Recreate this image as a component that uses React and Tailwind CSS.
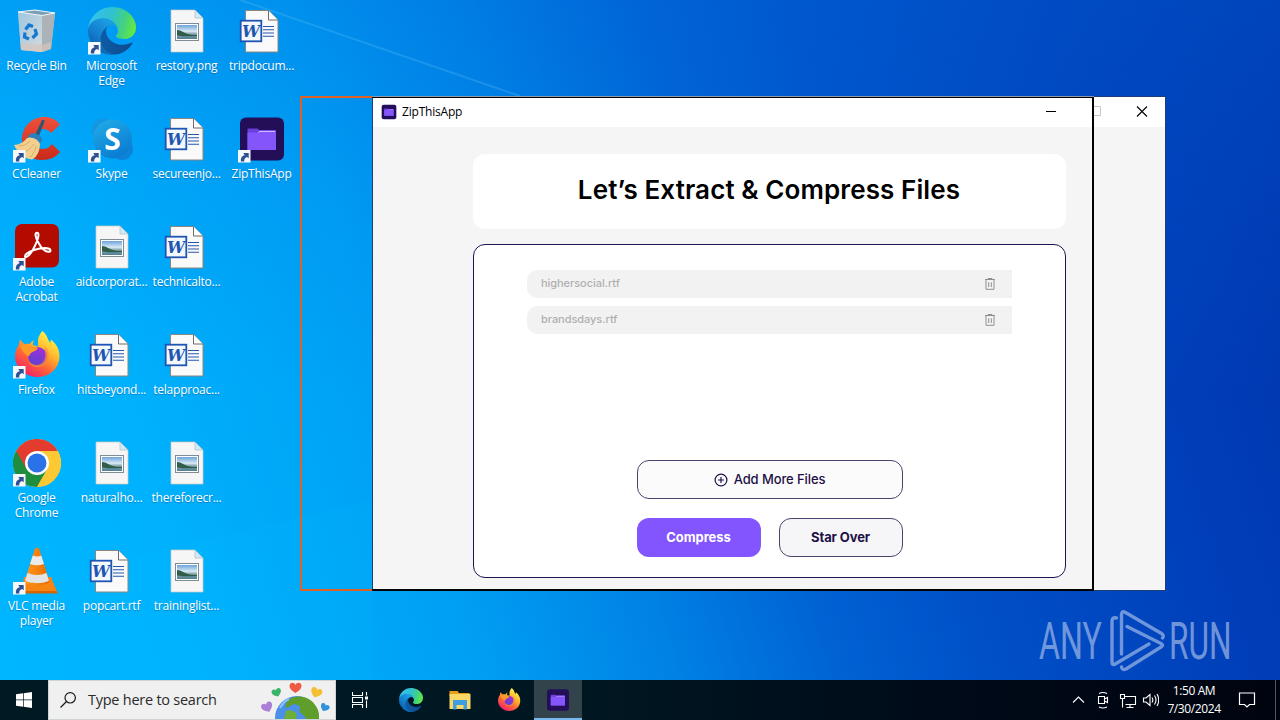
import React from "react";
import clsx from "clsx";

function ShortcutArrow() {
  return (
    <g>
      <rect x="0" y="35" width="12.5" height="12.5" fill="#f6f9fc" />
      <path d="M3 46.5c-.6-3.400 1-5.700 3.700-6.200L5.300 38h5.400v5.300L9 41.900c-2.200.8-3 2.300-2.700 4.600z" fill="#2d4f94" />
    </g>
  );
}

function RecycleBin() {
  return (
    <svg viewBox="0 0 48 48" className="w-12 h-12">
      <defs>
        <linearGradient id="binFront" x1="0" y1="0" x2="1" y2="1">
          <stop offset="0" stopColor="#9fc6de" />
          <stop offset="1" stopColor="#d3dade" />
        </linearGradient>
      </defs>
      <path d="M5 5l17-2 20 3-4 36-9 3-21-2z" fill="#a9bfcc" />
      <path d="M5 5l24 3v37l-21-2z" fill="url(#binFront)" />
      <path d="M29 8l13-2-4 36-9 3z" fill="#abb3b8" />
      <path d="M8 36l21 2 9-3-.5 7-8.500 3-21-2z" fill="#d9c4b8" opacity="0.700" />
      <path d="M5 5l17-2 20 3-13 2.500z" fill="#7ba0b4" stroke="#eef6fa" strokeWidth="1" />
      <g fill="none" stroke="#1577cf" strokeWidth="3.200">
        <path d="M12.500 22.500l3.500-4.500 4 1.500" />
        <path d="M22 22l1.500 5-4 4" />
        <path d="M16 32l-4.500-2 .5-4.500" />
      </g>
    </svg>
  );
}

function EdgeIcon({ shortcut, className = "w-12 h-12" }) {
  return (
    <svg viewBox="0 0 48 48" className={className}>
      <defs>
        <linearGradient id="edgeA" x1="0.200" y1="0.500" x2="1" y2="0.500">
          <stop offset="0" stopColor="#0c59a4" />
          <stop offset="1" stopColor="#114a8b" />
        </linearGradient>
        <linearGradient id="edgeB" x1="0.700" y1="0.200" x2="0.200" y2="0.900">
          <stop offset="0" stopColor="#1b9de2" />
          <stop offset="0.500" stopColor="#1480cf" />
          <stop offset="1" stopColor="#0a5cae" />
        </linearGradient>
        <linearGradient id="edgeC" x1="0" y1="0.400" x2="1" y2="0.600">
          <stop offset="0" stopColor="#35c1f1" />
          <stop offset="0.450" stopColor="#2fc2cf" />
          <stop offset="0.750" stopColor="#43d27e" />
          <stop offset="1" stopColor="#66eb3e" />
        </linearGradient>
      </defs>
      <g transform="scale(0.1875) translate(-4.63 -4.92)">
        <path fill="url(#edgeA)" d="M235.68 195.46a93.73 93.73 0 01-10.54 4.710 101.870 101.870 0 01-35.900 6.460c-47.320 0-88.540-32.550-88.540-74.320A31.480 31.480 0 01117.130 105c-42.800 1.800-53.800 46.400-53.800 72.530 0 73.880 68.090 81.370 82.760 81.370 7.910 0 19.840-2.300 27-4.560l1.310-.44a128.340 128.340 0 0066.600-52.800 4 4 0 00-5.320-5.640z" />
        <path fill="url(#edgeB)" d="M110.340 246.340A79.200 79.200 0 0187.600 225a80.720 80.720 0 0129.530-120c3.120-1.470 8.450-4.130 15.540-4a32.350 32.350 0 0125.690 13 31.880 31.880 0 016.360 18.660c0-.21 24.460-79.600-80-79.600-43.900 0-80 41.660-80 78.210a130.150 130.150 0 0012.110 56 128 128 0 00156.380 67.110 75.550 75.550 0 01-62.780-8z" />
        <path fill="url(#edgeC)" d="M156.940 153.780c-.81 1.050-3.300 2.500-3.300 5.660 0 2.610 1.700 5.120 4.720 7.230 14.380 10 41.490 8.680 41.560 8.680a59.560 59.560 0 0030.270-8.350 61.380 61.380 0 0030.430-52.880c.26-22.410-8-37.310-11.340-43.910C228.090 28.760 182.350 4.920 132.610 4.920a128 128 0 00-128 126.200c.48-36.540 36.800-66.050 80-66.050 3.500 0 23.460.34 42 10.070 16.340 8.580 24.900 18.940 30.850 29.210 6.180 10.670 7.280 24.150 7.280 29.520s-2.740 13.330-7.800 19.910z" />
      </g>
      {shortcut && <ShortcutArrow />}
    </svg>
  );
}

function ImageFile() {
  return (
    <svg viewBox="0 0 48 48" className="w-12 h-12">
      <defs>
        <linearGradient id="photo" x1="0" y1="0" x2="0" y2="1">
          <stop offset="0" stopColor="#6da4dc" />
          <stop offset="0.450" stopColor="#d8e9f3" />
          <stop offset="0.600" stopColor="#93b2b8" />
          <stop offset="1" stopColor="#4d7d92" />
        </linearGradient>
      </defs>
      <path d="M8 3h24l8 8v34H8z" fill="#f6f6f6" stroke="#cfc8c4" strokeWidth="0.700" />
      <path d="M32 3v8h8z" fill="#cfeafb" stroke="#b5bcc0" strokeWidth="0.700" />
      <rect x="12.500" y="16.500" width="23" height="17" fill="#fff" stroke="#7f8c93" />
      <rect x="14" y="18" width="20" height="14" fill="url(#photo)" />
      <path d="M14 23c4 0 7 3 11 4 3 .8 6 .8 9 1v1c-6 .5-14 .5-20-.5z" fill="#2f5d49" />
    </svg>
  );
}

function WordFile() {
  return (
    <svg viewBox="0 0 48 48" className="w-12 h-12">
      <path d="M7.500 3.500h23l9.500 9.500v32H7.500z" fill="#fafafa" stroke="#8b8580" />
      <path d="M30.500 3.500v9.500H40" fill="#fff" stroke="#6f6a66" />
      <path d="M25 19.500h11M25 22.700h11M25 26h11M25 29.300h11" stroke="#2457ad" strokeWidth="1.100" />
      <rect x="2.700" y="13.700" width="20.600" height="20.600" fill="#f4f8fd" stroke="#1f55b2" strokeWidth="1.800" />
      <text
        x="13"
        y="29.700"
        textAnchor="middle"
        fontFamily="DejaVu Serif, serif"
        fontWeight="700"
        fontStyle="italic"
        fontSize="16"
        fill="#1f55b2"
      >
        W
      </text>
    </svg>
  );
}

function CCleaner() {
  return (
    <svg viewBox="0 0 48 48" className="w-12 h-12">
      <defs>
        <linearGradient id="ccRed" x1="0" y1="0" x2="0" y2="1">
          <stop offset="0" stopColor="#f0503a" />
          <stop offset="1" stopColor="#c92a18" />
        </linearGradient>
      </defs>
      <path d="M47 9.500C42 3.500 36 1.500 30 2 17 3 9 13 9 25c0 12 8 20 20 20 8 0 14-3 18-8l-8-8c-3 4-6 5-9 5-6 0-9-4-9-10 0-6 4-10 9-10 3 0 6 1 8 4z" fill="url(#ccRed)" />
      <path d="M29 5c1.500-.8 3 .2 2.500 1.600L24 26l-4-1.500z" fill="#2d5573" />
      <path d="M17 19c4-2 11 1 12 5 0 2-1 4-3 5L14 23z" fill="#2c7fbd" />
      <path d="M14 23c5-2 12 2 13 6-.5 8-3 13-8 15.500C12 44 5 38 1 30c5 0 10-3 13-7z" fill="#f2cf8e" />
      <path d="M6 31c5 0 8-2 11-5M11 37c4-1 7-4 10-8M17 42c3-2 5-6 6-11" fill="none" stroke="#d3a45d" strokeWidth="0.800" />
      <ShortcutArrow />
    </svg>
  );
}

function Skype() {
  return (
    <svg viewBox="0 0 48 48" className="w-12 h-12">
      <defs>
        <linearGradient id="sky" x1="0" y1="0" x2="0.500" y2="1">
          <stop offset="0" stopColor="#22aeea" />
          <stop offset="1" stopColor="#0b7ed2" />
        </linearGradient>
      </defs>
      <circle cx="15" cy="15" r="11.500" fill="#1596e0" />
      <circle cx="34" cy="34" r="11" fill="#0c82d8" />
      <circle cx="24.500" cy="24" r="19.500" fill="url(#sky)" />
      <text x="24.500" y="35" textAnchor="middle" fontFamily="Open Sans, sans-serif" fontWeight="700" fontSize="30" fill="#fff">
        S
      </text>
      <ShortcutArrow />
    </svg>
  );
}

function ZipIcon({ shortcut, className = "w-12 h-12" }) {
  return (
    <svg viewBox="0 0 48 48" className={className}>
      <rect x="2" y="2.500" width="44" height="43" rx="6" fill="#230f58" />
      <path d="M9.500 14.500q0-1 1-1h9l1.500 1.500h15.500q1.500 0 1.500 1.500v18.500H9.500z" fill="#6a3fdc" />
      <path d="M9.500 17.500H20l2-2h16V35H9.500z" fill="#8355fb" />
      <path d="M20 17.500l1.500-1H37" stroke="#d8c9ff" strokeWidth="0.900" fill="none" />
      {shortcut && <ShortcutArrow />}
    </svg>
  );
}

function Acrobat() {
  return (
    <svg viewBox="0 0 48 48" className="w-12 h-12">
      <rect x="2" y="1" width="44" height="43.500" rx="7" fill="#b30b00" />
      <path
        d="M12 33.500c0-3 8-7 15-8 5-.7 10-.2 10.500 1.700.4 2-3.500 2.500-7-.7C26 22.500 23 15.500 22.500 12c-.3-3 3-3 3 0 0 4-3 10-6 15.500-3 5-7.500 8.500-7.500 6z"
        fill="none"
        stroke="#fff"
        strokeWidth="2"
        strokeLinejoin="round"
      />
      <ShortcutArrow />
    </svg>
  );
}

function Firefox({ shortcut, className = "w-12 h-12" }) {
  return (
    <svg viewBox="0 0 48 48" className={className}>
      <defs>
        <linearGradient id="foxBody" x1="0.800" y1="0.100" x2="0.250" y2="0.950">
          <stop offset="0" stopColor="#fff04a" />
          <stop offset="0.350" stopColor="#ffb52c" />
          <stop offset="0.650" stopColor="#ff6536" />
          <stop offset="1" stopColor="#f52269" />
        </linearGradient>
        <linearGradient id="foxGlobe" x1="0.700" y1="0" x2="0.300" y2="1">
          <stop offset="0" stopColor="#a32fd8" />
          <stop offset="1" stopColor="#5a42d2" />
        </linearGradient>
      </defs>
      <path
        d="M29.500 0c3 2.500 5 5.500 5.700 9 1 .6 1.500 2 1.800 3 .8-1 .9-2 .8-3.500C44 13 46.500 19 46.500 25.500 46.300 37.500 36.500 46 24.500 46S2.300 37 2 25.500c0-5.500 2-9.500 4-12 0-1.700.3-3.500 1-5 2 2 3 3.500 4.500 4.500 2-.5 3.600-.4 5 0C19 10 20 9.500 21 9.500c-1 1.500-1.300 3-1 4.500 2 .5 3.500 1 5 1.500V8c1-3.500 2.500-6 4.500-8z"
        fill="url(#foxBody)"
      />
      <circle cx="24.500" cy="25.500" r="9.500" fill="url(#foxGlobe)" />
      <path d="M7 15c4-2 9-1.500 12 0 2 1.200 5 1.200 6 2-1.500 3-5 3.500-7 5-1 1-1.500 2-2 3.500-4-1.500-7-6-9-10.500z" fill="#ff9a26" />
      <path d="M31 15c4 3 5.500 7 4.500 12-1.500 6.500-7 9.500-12.500 9-4-.5-7-3-8-6.500 3 4 8 5.500 12.500 3.500 5-2.500 6-10 3.500-18z" fill="#ff8a32" opacity="0.700" />
      {shortcut && <ShortcutArrow />}
    </svg>
  );
}

function Chrome() {
  return (
    <svg viewBox="0 0 48 48" className="w-12 h-12">
      <circle cx="24" cy="24" r="24" fill="#fcc934" />
      <path d="M24 24L3.200 12A24 24 0 0 1 44.800 12z" fill="#e33b2e" />
      <path d="M3.200 12A24 24 0 0 0 24 48l10.400-18L24 24z" fill="#1e8e3e" />
      <path d="M24 12h20.800A24 24 0 0 1 24 48l10.400-18z" fill="#fcc934" />
      <path d="M3.200 12L13.600 30 24 12z" fill="#e33b2e" />
      <circle cx="24" cy="24" r="12" fill="#fff" />
      <circle cx="24" cy="24" r="9.500" fill="#2b72e8" />
      <ShortcutArrow />
    </svg>
  );
}

function Vlc() {
  return (
    <svg viewBox="0 0 48 48" className="w-12 h-12">
      <defs>
        <linearGradient id="cone" x1="0" y1="0" x2="1" y2="0">
          <stop offset="0" stopColor="#ff9a1e" />
          <stop offset="1" stopColor="#e96a00" />
        </linearGradient>
      </defs>
      <path d="M11 30h27l6.500 16h-36z" fill="#f58412" />
      <path d="M8.500 44h36v2.500h-36z" fill="#d86400" />
      <path d="M22 1.500q2-1.500 4 0l10.500 33c-3 5-22 5-25 0z" fill="url(#cone)" />
      <path d="M19.800 8.500q4.200 2 8.400 0l2.800 8.500q-7 2.500-14 0z" fill="#ebebeb" />
      <path d="M14.500 26q9.500 4 19 0l2.500 7.500c-4 3.500-20 3.500-24 0z" fill="#e4e4e4" />
      <ShortcutArrow />
    </svg>
  );
}

// filled column by column, six rows each
const shortcuts = [
  { label: "Recycle Bin", icon: <RecycleBin /> },
  { label: "CCleaner", icon: <CCleaner /> },
  { label: "Adobe Acrobat", icon: <Acrobat />, wrap: true },
  { label: "Firefox", icon: <Firefox shortcut /> },
  { label: "Google Chrome", icon: <Chrome />, wrap: true },
  { label: "VLC media player", icon: <Vlc /> },
  { label: "Microsoft Edge", icon: <EdgeIcon shortcut />, wrap: true },
  { label: "Skype", icon: <Skype /> },
  { label: "aidcorporat...", icon: <ImageFile /> },
  { label: "hitsbeyond...", icon: <WordFile /> },
  { label: "naturalho...", icon: <ImageFile /> },
  { label: "popcart.rtf", icon: <WordFile /> },
  { label: "restory.png", icon: <ImageFile /> },
  { label: "secureenjo...", icon: <WordFile /> },
  { label: "technicalto...", icon: <WordFile /> },
  { label: "telapproac...", icon: <WordFile /> },
  { label: "thereforecr...", icon: <ImageFile /> },
  { label: "traininglist...", icon: <ImageFile /> },
  { label: "tripdocum...", icon: <WordFile /> },
  { label: "ZipThisApp", icon: <ZipIcon shortcut /> },
];

function DesktopIcons() {
  return (
    <div className="-ml-px grid grid-flow-col grid-rows-[repeat(6,108px)] auto-cols-[75px] w-max">
      {shortcuts.map((item) => (
        <div key={item.label} className="flex flex-col items-center pt-[7px]">
          {item.icon}
          <span
            className={clsx(
              "mt-[3px] text-center text-[12px] leading-[15px] text-white tracking-[-0.22px] [text-shadow:0_1px_1px_rgba(0,50,110,0.4)]",
              item.wrap && "w-[60px]"
            )}
          >
            {item.label}
          </span>
        </div>
      ))}
    </div>
  );
}

function Wallpaper() {
  return (
    <div className="absolute inset-0 bg-[linear-gradient(73deg,#00b5ff_0%,#00b2fd_14%,#009ff3_33%,#0081e4_46%,#0062d4_57%,#0050c8_67%,#003eb8_85%,#0034ac_100%)]">
      <div className="absolute inset-0 bg-[linear-gradient(180deg,rgba(0,110,225,0.28)_0%,rgba(0,120,235,0.12)_25%,rgba(0,120,235,0)_55%)]" />
      <svg viewBox="0 0 1280 720" className="absolute inset-0">
        <path d="M240 0L520 96" stroke="#7fd6ff" strokeWidth="2" opacity="0.200" />
        <path d="M0 590L372 500V720H0z" fill="#00bcff" opacity="0.150" />
      </svg>
    </div>
  );
}

function Trash() {
  return (
    <svg viewBox="0 0 12 12" className="w-3 h-3" fill="none" stroke="#8f8f8f" strokeWidth="1">
      <path d="M1 1.500h10M4 1.500V.5h4v1M2 1.500v9.800h8V1.500M4.700 4.300v4.700M7.300 4.300v4.700" />
    </svg>
  );
}

function FileRow({ name }) {
  return (
    <div className="flex items-center justify-between h-7 rounded-l-[10px] bg-[#f2f2f2] pl-[14px] pr-4">
      <span className="pb-px text-[11px] font-medium tracking-[-0.05px] text-[#b0b0b0]">{name}</span>
      <Trash />
    </div>
  );
}

function AppWindow() {
  return (
    <div className="absolute left-[372px] top-[96px] w-[794px] h-[495px] flex flex-col border border-[#1c3f78] bg-[#f5f5f6]">
      {/*title bar*/}
      <div className="flex items-center h-[30px] shrink-0 bg-white pl-2">
        <ZipIcon className="w-4 h-4" />
        <span className="ml-[5px] text-[12px] tracking-[-0.2px] text-black">ZipThisApp</span>
        <svg viewBox="0 0 120 28" className="ml-auto w-[120px] h-7" fill="none">
          <path d="M1 13.500h10" stroke="#000" />
          <path d="M47.500 8.500h8v9h-8z" stroke="#c8c8c8" />
          <path d="M92 8.500l10 10M102 8.500l-10 10" stroke="#000" strokeWidth="1.100" />
        </svg>
      </div>
      {/*body*/}
      <div className="flex flex-col pl-[99.5px] pt-[27px] font-['Inter',sans-serif]">
        <div className="flex items-center justify-center w-[593px] h-[75px] rounded-xl bg-white">
          <h1 className="pb-1 text-[26px] font-semibold tracking-[0.1px] text-black whitespace-nowrap">
            Let’s Extract & Compress Files
          </h1>
        </div>
        <div className="mt-[15px] w-[593px] h-[334px] rounded-xl border border-[#22124f] bg-white flex flex-col pt-[25px] pl-[53.5px] pr-[52.5px]">
          <div className="flex flex-col gap-2">
            <FileRow name="highersocial.rtf" />
            <FileRow name="brandsdays.rtf" />
          </div>
          <div className="ml-[109.5px] mt-[126px] w-[266px] grid grid-cols-2 gap-x-[18px] gap-y-5 text-[13px] text-[#1e1147]">
            <button className="col-span-2 flex items-center justify-center gap-1.5 h-[39px] -mb-px rounded-xl border border-[#4b4270] bg-[#fbfbfb] font-medium tracking-[-0.1px]">
              <svg viewBox="0 0 14 14" className="w-[14px] h-[14px]" fill="none" stroke="#1e1147" strokeWidth="1.200">
                <circle cx="7" cy="7" r="5.900" />
                <path d="M7 4v6M4 7h6" />
              </svg>
              Add More Files
            </button>
            <button className="h-[39px] rounded-xl bg-[#8355ff] text-white font-bold tracking-[-0.05px]">Compress</button>
            <button className="h-[39px] rounded-xl border border-[#4b4270] bg-[#f6f6f8] font-bold tracking-[-0.1px]">
              Star Over
            </button>
          </div>
        </div>
      </div>
    </div>
  );
}

// outline left behind while the window is dragged
function DragOutline() {
  return (
    <div className="absolute left-[300px] top-[96px] w-[794px] h-[495px] flex">
      <div className="w-[72px] border-2 border-r-0 border-[#de6226]" />
      <div className="flex-1 border-t border-t-[#8e98a8] flex">
        <div className="flex-1 border-t border-b-2 border-r-2 border-black" />
      </div>
    </div>
  );
}

function Watermark() {
  return (
    <svg viewBox="0 0 220 70" className="absolute left-[1036px] top-[605px] w-[220px] h-[70px] opacity-60">
      <g fontFamily="Roboto, sans-serif" fontWeight="400" fontSize="51" fill="#b9cbee">
        <text transform="translate(3 54) scale(.63 1)">ANY</text>
        <text transform="translate(133 54) scale(.62 1)">RUN</text>
      </g>
      <g fill="none" stroke="#b9cbee" strokeWidth="3.400" strokeLinejoin="round" strokeLinecap="round">
        <path d="M80.500 13q-4.500-1-4.500 3v41q0 4 4 1.500L113 39" />
        <path d="M85.500 49V10q0-5 4-2.500l36 21q3 2 1 4.500" />
        <path d="M91 21.500l34 17q3 1.500 0 3.500L90 64q-4 1.500-4.500-2" />
      </g>
    </svg>
  );
}

function Globe() {
  const heart = "M0 -2c-1-3-6-3-6 1 0 3 3 5 6 7 3-2 6-4 6-7 0-4-5-4-6-1z";
  return (
    <svg viewBox="0 0 74 38" className="w-[74px] h-[38px] self-end">
      <circle cx="36" cy="37" r="22" fill="#4a90e8" />
      <path d="M29 18c8-5 20-2 25 6 4 5 4 9 4 14H45c-1-4-6-5-7-9 3-3 0-5-4-6-3 0-5 3-9 4-1-4 1-7 4-9z" fill="#5f9e2b" />
      <path d="M25 30c4-2 8 0 11 3l-1 5H23z" fill="#6fae37" />
      <path d="M19 27q4-7 9-9" stroke="#8fc3ff" strokeWidth="2" fill="none" />
      <path d={heart} transform="translate(34.500 6)" fill="#ef5a42" />
      <path d={heart} transform="translate(15.500 11) rotate(-20) scale(.8)" fill="#3bb36b" />
      <path d={heart} transform="translate(55.500 11) rotate(20) scale(.95)" fill="#f5bf34" />
      <path d={heart} transform="translate(6 25.500) rotate(-25) scale(.95)" fill="#ab7fd6" />
      <path d={heart} transform="translate(64 26) rotate(25) scale(.75)" fill="#2e92dd" />
    </svg>
  );
}

function Taskbar() {
  return (
    <div className="absolute inset-x-0 bottom-0 h-10 flex items-stretch bg-[linear-gradient(90deg,#001a24_0%,#001722_45%,#000a18_75%,#00040f_100%)]">
      <div className="w-12 flex items-center justify-center">
        <svg viewBox="0 0 16 16" className="w-4 h-4" fill="#fff">
          <path d="M0 2.300l7-1v6.300H0zM7.700 1.200L16 0v7.600H7.700zM0 8.300h7v6.400l-7-1zM7.700 8.300H16V16l-8.300-1.200z" />
        </svg>
      </div>
      <div className="w-[288px] flex items-center bg-[#f0f0f0] border border-[#cfd4d6] pl-[11px]">
        <svg viewBox="0 0 16 16" className="w-4 h-4" fill="none" stroke="#1a1a1a" strokeWidth="1.200">
          <circle cx="10.200" cy="5.800" r="5.200" />
          <path d="M6.500 9.500L.5 15.500" />
        </svg>
        <span className="ml-3 text-[14.500px] tracking-[-0.25px] text-[#2b2b2b] whitespace-nowrap">Type here to search</span>
        <div className="ml-auto flex self-stretch">
          <Globe />
        </div>
      </div>
      <div className="w-12 flex items-center justify-center">
        <svg viewBox="0 0 16 16" className="w-4 h-4" fill="none" stroke="#fff" strokeWidth="1.100">
          <path d="M.5 0v3.500h10V0M.5 16v-3.500h10V16M.5 5.500h10v5H.5zM14.500 0v3.500M14.500 8.500V16" />
          <path d="M13 4.500h3v3h-3z" fill="#fff" stroke="none" />
        </svg>
      </div>
      <div className="w-[51px] flex items-center justify-center pl-0.5">
        <EdgeIcon className="w-6 h-6" />
      </div>
      <div className="w-[49px] flex items-center justify-center">
        <svg viewBox="0 0 24 24" className="w-6 h-6">
          <path d="M1.500 3h8l1.500 2h10.500v3h-20z" fill="#e79c1c" />
          <path d="M1.500 6h21v15h-21z" fill="#fbd768" />
          <path d="M5 12h14v9.500h-3.500V17h-7v4.500H5z" fill="#3f9ee0" />
        </svg>
      </div>
      <div className="w-[50px] flex items-center justify-center">
        <Firefox className="w-6 h-6" />
      </div>
      <div className="w-12 flex items-center justify-center bg-[#33434c] border-b-2 border-[#76b9ed] pt-0.5">
        <ZipIcon className="w-6 h-6" />
      </div>
      {/*tray*/}
      <div className="ml-auto flex items-center">
        <svg viewBox="0 0 90 20" className="-mr-px w-[90px] h-5" fill="none" stroke="#fff" strokeWidth="1.100">
          <path d="M4 12.500L9.500 7l5.500 5.500" />
          <path d="M29.500 6.500h6v7h-6zM35.500 9l3-1.500v5l-3-1.500M30 3.500q4-2 8 0M30 17q4 2 8 0" />
          <path d="M55.500 6.500h11v8h-10M61 14.500v3M57.500 17.500h7M51.500 4.500h4v4h-4zM53.500 8.500v9" />
          <path d="M74.500 8h2.500l4-3.500v11l-4-3.500h-2.500zM83 7.500q1.700 2.500 0 5M85.500 5.500q3 4.500 0 9M88 4q3.500 6 0 12" />
        </svg>
        <div className="w-[72px] text-center text-[12px] leading-[18px] text-white tracking-[-0.4px]">
          <div>1:50 AM</div>
          <div>7/30/2024</div>
        </div>
        <svg viewBox="0 0 18 18" className="ml-2 w-[18px] h-[18px]" fill="none" stroke="#fff" strokeWidth="1.200">
          <path d="M1.500 2h15v11.500H11.500L9 16l-2.500-2.500h-5z" />
        </svg>
        <div className="ml-[19px] mr-1 w-px h-10 bg-[#4b5563]" />
      </div>
    </div>
  );
}

export default function App() {
  return (
    <div className="relative w-[1280px] h-[720px] overflow-hidden font-['Open_Sans',sans-serif]">
      <Wallpaper />
      <div className="relative">
        <DesktopIcons />
      </div>
      <Watermark />
      <AppWindow />
      <DragOutline />
      <Taskbar />
    </div>
  );
}
